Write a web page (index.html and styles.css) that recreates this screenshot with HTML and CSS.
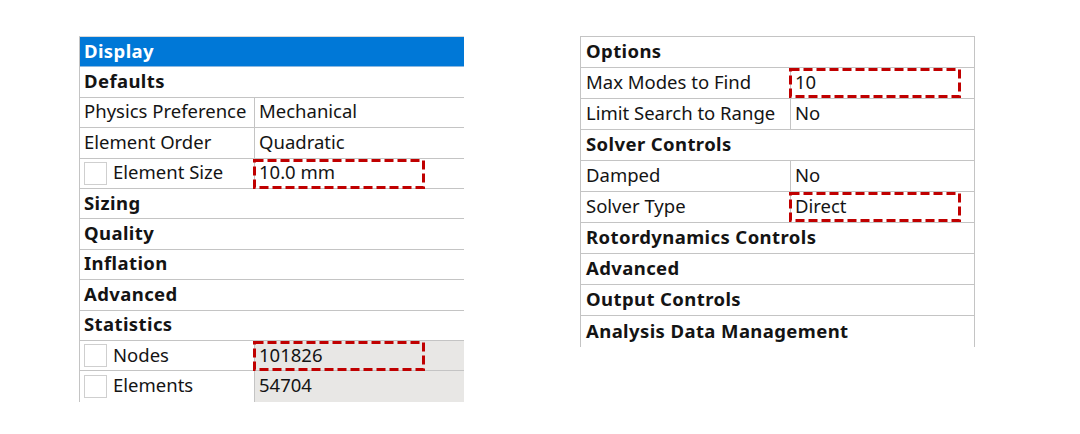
FILE: index.html
```html
<!DOCTYPE html>
<html>
<head>
<meta charset="utf-8">
<link rel="stylesheet" href="styles.css">
</head>
<body>
<div class="page">
  <div class="table table-left">
    <div class="row head blue">Display</div>
    <div class="row head">Defaults</div>
    <div class="row pair"><div class="lab">Physics Preference</div><div class="val">Mechanical</div></div>
    <div class="row pair"><div class="lab">Element Order</div><div class="val">Quadratic</div></div>
    <div class="row pair"><div class="lab"><span class="chk"></span>Element Size</div><div class="val">10.0 mm<svg class="mark" width="172" height="30"><rect x="1.5" y="1.5" width="169" height="27" /></svg></div></div>
    <div class="row head">Sizing</div>
    <div class="row head">Quality</div>
    <div class="row head">Inflation</div>
    <div class="row head">Advanced</div>
    <div class="row head">Statistics</div>
    <div class="row pair"><div class="lab"><span class="chk"></span>Nodes</div><div class="val gray">101826<svg class="mark" width="172" height="30"><rect x="1.5" y="1.5" width="169" height="27" /></svg></div></div>
    <div class="row pair last"><div class="lab"><span class="chk"></span>Elements</div><div class="val gray">54704</div></div>
  </div>
  <div class="table table-right">
    <div class="row head">Options</div>
    <div class="row pair"><div class="lab">Max Modes to Find</div><div class="val">10<svg class="mark" width="172" height="30"><rect x="1.5" y="1.5" width="169" height="27" /></svg></div></div>
    <div class="row pair"><div class="lab">Limit Search to Range</div><div class="val">No</div></div>
    <div class="row head">Solver Controls</div>
    <div class="row pair"><div class="lab">Damped</div><div class="val">No</div></div>
    <div class="row pair"><div class="lab">Solver Type</div><div class="val">Direct<svg class="mark" width="172" height="30"><rect x="1.5" y="1.5" width="169" height="27" /></svg></div></div>
    <div class="row head">Rotordynamics Controls</div>
    <div class="row head">Advanced</div>
    <div class="row head">Output Controls</div>
    <div class="row head last">Analysis Data Management</div>
  </div>
</div>
</body>
</html>
```
FILE: styles.css
```css
html, body {
  margin: 0;
  padding: 0;
  background: #ffffff;
}
body {
  font-family: "Noto Sans", "Open Sans", sans-serif;
  font-size: 18.5px;
  color: #141414;
}
.page {
  display: flex;
  align-items: flex-start;
  padding-top: 36px;
  padding-left: 79px;
  gap: 116px;
}
.table {
  display: flex;
  flex-direction: column;
  border-left: 1px solid #c4c4c4;
  border-top: 1px solid #c4c4c4;
}
.table-left {
  width: 384px;
  border-top-color: #d8d8d8;
}
.table-right {
  width: 393px;
  border-right: 1px solid #c4c4c4;
}
.row {
  box-sizing: border-box;
  border-bottom: 1px solid #c4c4c4;
  display: flex;
  align-items: center;
  padding-bottom: 3px;
}
.table-left .row { height: 30.4px; }
.table-right .row { height: 31px; }
.row.last { border-bottom: none; }
.head {
  font-weight: 700;
  letter-spacing: 0.4px;
  padding-left: 4px;
}
.table-right .head { padding-left: 5px; }
.blue {
  background: #0078d7;
  color: #ffffff;
  border-bottom-color: #8cb8e0;
}
.pair { align-items: stretch; padding-bottom: 0; }
.lab {
  display: flex;
  align-items: center;
  padding-left: 4px;
  padding-bottom: 3px;
  border-right: 1px solid #c4c4c4;
  box-sizing: border-box;
}
.table-left .lab { width: 175px; }
.table-right .lab { width: 210px; padding-left: 5px; }
.val {
  position: relative;
  flex: 1;
  display: flex;
  align-items: center;
  padding-left: 4px;
  padding-bottom: 3px;
}
.val.gray { background: #e8e7e5; }
.chk {
  width: 21px;
  height: 21px;
  border: 1px solid #cfcfcf;
  background: #fff;
  margin-right: 6px;
  margin-top: 3px;
  flex: none;
}
.mark {
  position: absolute;
  left: -2px;
  top: 0;
  pointer-events: none;
}
.mark rect {
  fill: none;
  stroke: #c00000;
  stroke-width: 3;
  stroke-dasharray: 9 4;
}
```
